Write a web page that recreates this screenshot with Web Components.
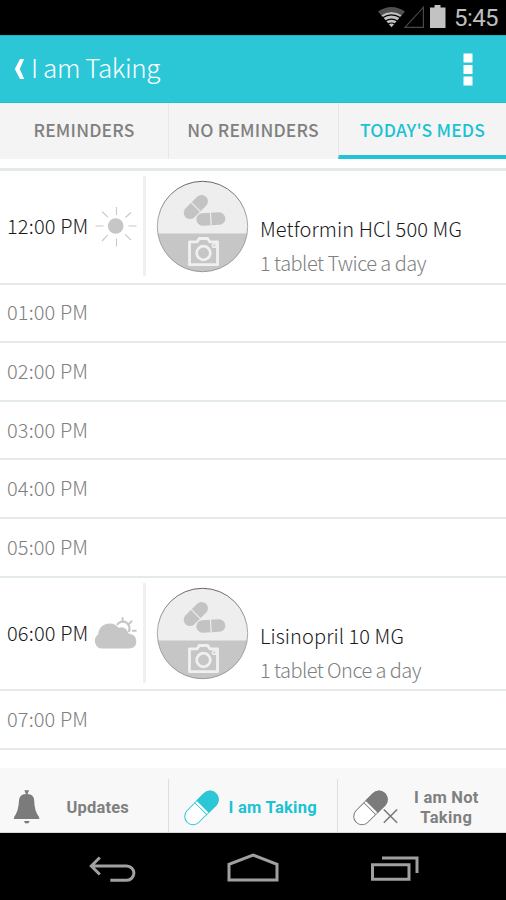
<!DOCTYPE html>
<html lang="en">
<head>
<meta charset="utf-8">
<title>I am Taking</title>
<style>
html,body{margin:0;background:#fff}
body{width:506px;height:900px;overflow:hidden;font-family:"Noto Sans CJK SC","Noto Sans",sans-serif}
</style>
</head>
<body>
<meds-app></meds-app>
<script>
const define=(name,html,setup)=>customElements.define(name,class extends HTMLElement{
  connectedCallback(){
    if(this.shadowRoot)return;
    const t=document.createElement('template');
    t.innerHTML=html;
    this.attachShadow({mode:'open'}).append(t.content.cloneNode(true));
    if(setup)setup(this,this.shadowRoot);
  }
});

/* Single-line label whose tracking is adjusted to reach a given width. */
define('fit-label',`<style>:host{display:block;white-space:nowrap;line-height:24px}span{display:inline-block}</style><span><slot></slot></span>`,(el,r)=>{
  const s=r.querySelector('span'),w=+el.getAttribute('width'),n=el.textContent.length;
  const natural=s.getBoundingClientRect().width;
  if(w&&n&&natural)s.style.letterSpacing=((w-natural)/n).toFixed(3)+'px';
});

define('status-bar',`<style>
:host{display:flex;height:35px;background:#000;color:#bebebe;justify-content:flex-end;box-sizing:border-box;padding-right:8px;font:24px/36px Roboto,sans-serif}
svg{width:78px;height:35px;flex:none}
fit-label{line-height:37px;width:44px;margin-left:-1px}
</style>
<svg viewBox="0 0 78 35"><path d="M1 11.5Q14.5 2.5 28 11.5L24.6 15.4Q14.5 8.5 4.4 15.4Z" fill="#505050"/><path d="M4.4 15.2Q14.5 8.8 24.6 15.2L14.5 27.2Z" fill="#c2c2c2"/><path d="M5.5 17.8Q14.5 11.8 23.5 17.8M8.3 21Q14.5 17.2 20.7 21M11 24Q14.5 22 18 24" fill="none" stroke="#000" stroke-width="1.2"/><path d="M28 27.3L46.4 7.2V27.3Z" fill="none" stroke="#484848" stroke-width="1.2"/><path d="M57.500 5h6v2.5h5V28H53V7.500h4.500Z" fill="#c2c2c2"/></svg>
<fit-label width="44">5:45</fit-label>`);

define('title-bar',`<style>
:host{display:flex;align-items:flex-start;height:68px;box-sizing:border-box;background:#2bc7d7;border-top:1px solid #15b9cb;border-bottom:1px solid #18c2d5;color:#fff;font-size:26px;font-weight:300;padding:0 32px 0 14px}
.back{width:11px;height:22px;margin-top:22px}
fit-label{line-height:40px;margin:11px 0 0 6px;flex:1}
.more{width:11px;height:34px;margin-top:16px}
</style>
<svg class="back" viewBox="0 0 11 22"><path d="M6 1H10.200L5.800 11L10.200 21H6L.8 11Z" fill="#fff"/></svg>
<fit-label width="129">I am Taking</fit-label>
<svg class="more" viewBox="0 0 11 34"><path d="M.5 1.500h9v9h-9zM.5 13h9v9h-9zM.5 24.500h9v9h-9z" fill="#fff"/></svg>`);

define('tab-item',`<style>
:host{display:flex;justify-content:center;box-sizing:border-box;height:56px;background:#f4f4f4;border-left:1px solid #e7e7e7;color:#808080;font-size:17.500px;font-weight:500;padding-top:15px}
:host([first]){border-left:0}
:host([active]){color:#1bc2d4;border-bottom:4px solid #22c3d4}
</style><slot></slot>`);

define('tab-strip',`<style>:host{display:grid;grid-template-columns:168px 170px 168px;height:56px}.shift{margin-left:-1px}</style>
<tab-item first><fit-label width="101">REMINDERS</fit-label></tab-item>
<tab-item><fit-label class="shift" width="131.500">NO REMINDERS</fit-label></tab-item>
<tab-item active><fit-label width="125">TODAY'S MEDS</fit-label></tab-item>`);

define('hour-row',`<style>
:host{display:block;box-sizing:border-box;border-top:2px solid #e4eaea;color:#808080;font-size:20px;font-weight:300;letter-spacing:.13px;padding:16px 0 0 7px}
:host([first]){padding-top:15px}
</style><fit-label><slot></slot></fit-label>`,(el,r)=>{
  el.style.height=el.getAttribute('size')+'px';
});

define('sky-icon',`<style>:host{display:block}svg{display:block;width:44px;height:44px}</style><svg viewBox="0 0 44 44"></svg>`,(el,r)=>{
  r.querySelector('svg').innerHTML=el.getAttribute('kind')==='sun'
   ?'<circle cx="21.700" cy="21" r="7.800" fill="#c6c6c6"/><path d="M22.500 2v8M22.500 33.500v8M1.500 21h8M34.500 21h8M8 6.500l5.800 5.600M37 7.500l-5.500 5M8 36l5.600-5.800M36.800 35l-5.600-5.600" stroke="#c8c8c8" stroke-width="1.100" fill="none"/>'
   :'<g transform="translate(.4 1) scale(.965 1)"><path d="M8.500 35.400A7.600 7.600 0 0 1 3.900 21.500C4.500 14 10 10.500 16 10.500Q21.500 10.500 25 14.800Q32 12.200 35.500 20.500Q43.500 21.500 43.500 28.500Q43 35.400 36 35.400Z" fill="#c6c6c6"/><path d="M23.500 12A6.400 6.400 0 0 1 35.500 19" fill="none" stroke="#c6c6c6" stroke-width="2.200"/><path d="M29.200 5v3.500M38.500 8.200l-2.400 2.600M39.800 17.800h3.200" stroke="#c6c6c6" stroke-width="2" stroke-linecap="round"/></g>';
});

define('pill-photo',`<style>:host{display:block}svg{display:block;width:93px;height:93px}</style>
<svg viewBox="0 0 93 93">
<defs><clipPath id="c"><circle cx="46.500" cy="46.500" r="45.300"/></clipPath><linearGradient id="g" x2="0" y2="1"><stop stop-color="#666"/><stop offset=".45" stop-color="#aaa"/><stop offset="1" stop-color="#999"/></linearGradient></defs>
<g clip-path="url(#c)"><path d="M0 0h93v93H0z" fill="#eee"/><path d="M0 53.500h93v40H0z" fill="#c6c6c6"/></g>
<circle cx="46.500" cy="46.500" r="45.200" fill="none" stroke="url(#g)" stroke-width="1"/>
<g fill="#c3c3c3"><g transform="translate(39.800 27) rotate(-45)"><rect x="-14.500" y="-6.300" width="29" height="12.600" rx="6.300"/><path d="M0-6.500v13" stroke="#eee" stroke-width="1.200"/></g><g transform="translate(54.800 39) rotate(-3)"><rect x="-14.500" y="-6.200" width="29" height="12.400" rx="6.200"/><path d="M0-6.500v13" stroke="#eee" stroke-width="1.200"/></g></g>
<g fill="none" stroke="#f0f0f0"><path d="M33.500 61.800H41.200L43.200 58.500H51.700L53.700 61.800H61.500V84.700H33.500Z" stroke-width="2.800" stroke-linejoin="round"/><circle cx="47.500" cy="73" r="6.800" stroke-width="2.700"/><circle cx="58.200" cy="65.500" r="1.800" stroke-width="1.500"/></g>
</svg>`);

define('dose-row',`<style>
:host{display:grid;grid-template-columns:87px 49px 20px 93px 1fr;box-sizing:border-box;border-top:2px solid #e4eaea;padding-left:7px;font-size:20px;font-weight:300;color:#1a1a1a}
:host([first]){border-top-width:3px}
.time{margin-top:43px}
sky-icon{margin-top:34px}
.rule{width:3px;height:100px;background:#f0f0f0;margin-top:5px}
pill-photo{margin:9px 0 0 -7px}
.text{padding:46px 0 0 4px}
.dose{color:#808080;margin-top:10px}
</style>
<fit-label class="time"></fit-label><sky-icon></sky-icon><div class="rule"></div><pill-photo></pill-photo>
<div class="text"><fit-label class="name"></fit-label><fit-label class="dose"></fit-label></div>`,(el,r)=>{
  el.style.height=el.getAttribute('size')+'px';
  const fill=(sel,text,w)=>{const old=r.querySelector(sel),n=document.createElement('fit-label');n.className=old.className;n.textContent=text;n.setAttribute('width',w);old.replaceWith(n)};
  fill('.time',el.getAttribute('time'),81.5);
  fill('.name',el.getAttribute('name'),el.getAttribute('name-width'));
  fill('.dose',el.getAttribute('dose'),el.getAttribute('dose-width'));
  const s=document.createElement('sky-icon');s.setAttribute('kind',el.getAttribute('sky'));
  r.querySelector('sky-icon').replaceWith(s);
});

define('day-list',`<style>:host{display:block;height:609px;box-sizing:border-box;padding-top:9px;background:#fff}</style>
<dose-row first size="115" time="12:00 PM" sky="sun" name="Metformin HCl 500 MG" name-width="202" dose="1 tablet Twice a day" dose-width="166"></dose-row>
<hour-row first size="58">01:00 PM</hour-row>
<hour-row size="59">02:00 PM</hour-row>
<hour-row size="58">03:00 PM</hour-row>
<hour-row size="59">04:00 PM</hour-row>
<hour-row size="59">05:00 PM</hour-row>
<dose-row size="113" time="06:00 PM" sky="cloud" name="Lisinopril 10 MG" name-width="144" dose="1 tablet Once a day" dose-width="161"></dose-row>
<hour-row size="59">07:00 PM</hour-row>
<hour-row size="2"></hour-row>`);

define('footer-bar',`<style>
:host{display:grid;grid-template-columns:168px 169px 169px;height:65px;box-sizing:border-box;background:#f8f8f8;border-bottom:1px solid #d8d8d8;color:#808080;font:bold 16.500px/20px Roboto,sans-serif}
div{display:flex;align-items:flex-start}
.b,.c{border-left:1px solid #dedede;margin-top:11px}
svg{flex:none}
fit-label{line-height:20px}
.a svg{width:28px;height:36px;margin:21px 0 0 13px}.a fit-label{margin:30px 0 0 25.500px}
.b{color:#1bc2d4}.b svg,.c svg{width:48px;height:38px;margin:10px 0 0 14px}
.b fit-label{margin:19px 0 0 -2.500px}
.c p{margin:9px 0 0 14px;display:flex;flex-direction:column;align-items:center}
</style>
<div class="a"><svg viewBox="0 0 28 36"><path d="M11.300 1.200h4.900L14.500 5q6.400 .4 6.700 6.600Q21.200 22 26.200 28.200V30H1v-1.800Q5.700 22 6 11.600Q6.300 5.400 12.900 5ZM11 32h5.600q-.5 2.600-2.800 2.600T11 32Z" fill="#7b7b7b"/></svg><fit-label width="62.500">Updates</fit-label></div>
<div class="b"><svg viewBox="0 0 48 38"><g transform="translate(18.500 18.900) rotate(-45)"><rect x="-20.300" y="-8.300" width="40.600" height="16.600" rx="8.300" fill="#fff" stroke="#2bc7d7"/><path d="M1.500-8.800H12a8.800 8.800 0 0 1 0 17.600H1.500Z" fill="#2bc7d7"/><path d="M-1-8.300V8.300" stroke="#2bc7d7"/><path d="M.4-8V8" stroke="#fff" stroke-width="1.400"/></g></svg><fit-label width="88.500">I am Taking</fit-label></div>
<div class="c"><svg viewBox="0 0 48 38"><g transform="translate(18.500 18.900) rotate(-45)"><rect x="-20.300" y="-8.300" width="40.600" height="16.600" rx="8.300" fill="#fff" stroke="#7b7b7b"/><path d="M1.500-8.800H12a8.800 8.800 0 0 1 0 17.600H1.500Z" fill="#7b7b7b"/><path d="M-1-8.300V8.300" stroke="#7b7b7b"/><path d="M.4-8V8" stroke="#fff" stroke-width="1.400"/></g><path d="M31.800 20.500l13.300 13.300M45.100 20.500L31.800 33.800" stroke="#7b7b7b" stroke-width="1.600"/></svg><p><fit-label width="64.500">I am Not</fit-label><fit-label width="52">Taking</fit-label></p></div>`);

define('nav-bar',`<style>:host{display:grid;grid-template-columns:48px 54px 48px;column-gap:90px;height:67px;box-sizing:border-box;background:#000;padding:20px 0 0 89px}svg{height:30px;width:100%;overflow:visible}path{fill:none;stroke:#a0a0a0;stroke-width:3}</style>
<svg viewBox="0 0 48 30"><path d="M2 14H37.500a7.100 7.100 0 0 1 0 14.200H21M10.500 5.500L2 14l8.500 8.500" transform="translate(.3 -1)"/></svg>
<svg viewBox="0 0 54 30"><path d="M2.500 27.500V11.800L26.500 2.500L50.500 11.800V27.500Z" transform="translate(-.5 -.5)"/></svg>
<svg viewBox="0 0 48 30"><path d="M1.500 12.700H38V27.200H1.500ZM11 6H46V21" transform="translate(0 -1)"/></svg>`);

define('meds-app',`<style>:host{display:flex;flex-direction:column;width:506px;height:900px}</style>
<status-bar></status-bar><title-bar></title-bar><tab-strip></tab-strip><day-list></day-list><footer-bar></footer-bar><nav-bar></nav-bar>`);
</script>
</body>
</html>
